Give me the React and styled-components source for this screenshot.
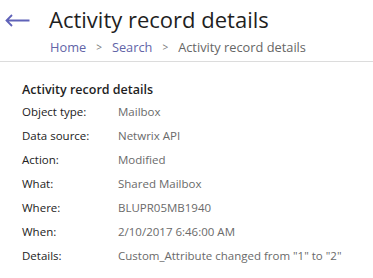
import React from "react";
import styled, { createGlobalStyle } from "styled-components";

const GlobalStyle = createGlobalStyle`
  body {
    margin: 0;
    background: #fff;
    font-family: "Open Sans", "Noto Sans", sans-serif;
  }
`;

const rows = [
  ["Object type:", "Mailbox"],
  ["Data source:", "Netwrix API"],
  ["Action:", "Modified"],
  ["What:", "Shared Mailbox"],
  ["Where:", "BLUPR05MB1940"],
  ["When:", "2/10/2017 6:46:00 AM"],
  ["Details:", 'Custom_Attribute changed from "1" to "2"'],
];

const App = () => {
  return (
    <Page>
      <GlobalStyle />
      <Header>
        <TitleRow>
          <BackButton aria-label="Back">
            <svg width="25" height="13" viewBox="0 0 25 13" fill="none">
              <path d="M24.5 6.5H1.5M7 1L1.5 6.5L7 12" stroke="#5f62b8" strokeWidth="1.8" />
            </svg>
          </BackButton>
          <Title>Activity record details</Title>
        </TitleRow>
        <Breadcrumbs>
          <Crumb href="#">Home</Crumb>
          <Sep>&gt;</Sep>
          <Crumb href="#">Search</Crumb>
          <Sep>&gt;</Sep>
          <Current>Activity record details</Current>
        </Breadcrumbs>
      </Header>
      <Section>
        <SectionTitle>Activity record details</SectionTitle>
        <DetailList>
          {rows.map(([label, value]) => (
            <DetailRow key={label}>
              <Label>{label}</Label>
              <Value>{value}</Value>
            </DetailRow>
          ))}
        </DetailList>
      </Section>
    </Page>
  );
};

export default App;

// Styled Components
const Page = styled.div`
  width: 373px;
  height: 278px;
  overflow: hidden;
  color: #222;
`;

const Header = styled.header`
  padding: 2px 0 4px;
  border-bottom: 1px solid #dcdcdc;
`;

const TitleRow = styled.div`
  display: flex;
  align-items: center;
`;

const BackButton = styled.button`
  display: flex;
  align-items: center;
  width: 49px;
  height: 34px;
  padding: 2px 0 0 5px;
  margin: 0;
  border: none;
  background: none;
  cursor: pointer;
`;

const Title = styled.h1`
  margin: 0;
  font-size: 22px;
  font-weight: 400;
  line-height: 34px;
  color: #1f1f1f;
`;

const Breadcrumbs = styled.nav`
  display: flex;
  align-items: center;
  margin-top: 2px;
  padding-left: 50px;
  font-size: 12.8px;
  line-height: 19px;
`;

const Crumb = styled.a`
  color: #6264a7;
  text-decoration: none;
`;

const Sep = styled.span`
  margin: 0 10px;
  color: #777;
  font-size: 10px;
`;

const Current = styled.span`
  color: #666;
`;

const Section = styled.section`
  padding: 19px 22px 0;
`;

const SectionTitle = styled.h2`
  margin: 0;
  font-size: 12.5px;
  font-weight: 600;
  line-height: 18px;
  color: #1f1f1f;
`;

const DetailList = styled.div`
  display: flex;
  flex-direction: column;
`;

const DetailRow = styled.div`
  display: flex;
  height: 24px;
  align-items: center;
  font-size: 11.5px;
`;

const Label = styled.span`
  width: 96px;
  flex-shrink: 0;
  color: #222;
`;

const Value = styled.span`
  color: #6a6a6a;
`;
